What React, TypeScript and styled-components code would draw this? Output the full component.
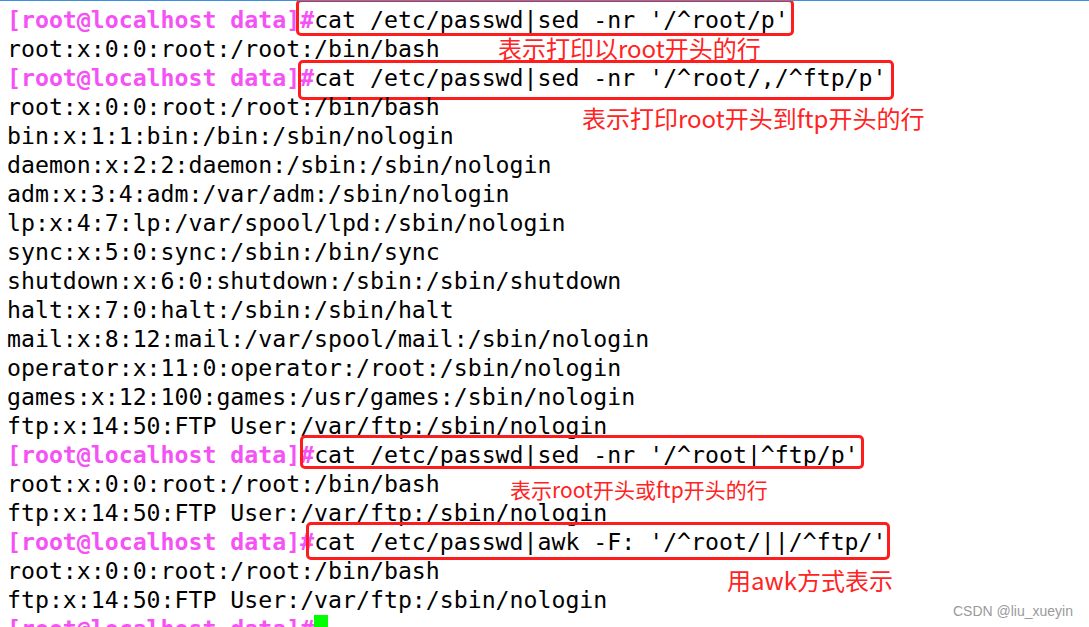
import React from "react";
import styled, { createGlobalStyle } from "styled-components";

const Global = createGlobalStyle`
  html, body { margin: 0; padding: 0; background: #fff; }
  body { width: 1089px; height: 627px; overflow: hidden; }
`;

const Screen = styled.div`
  position: relative;
  width: 1089px;
  height: 627px;
  overflow: hidden;
  background: #fff;
  border-top: 1px solid #3d8fe0;
  box-sizing: border-box;
`;

const Terminal = styled.div`
  display: flex;
  flex-direction: column;
  padding: 4px 0 0 7px;
  font-family: "DejaVu Sans Mono", monospace;
  font-size: 23.2px;
  line-height: 29px;
  color: #000;
  white-space: pre;
`;

const Line = styled.div`
  position: relative;
  height: 29px;
`;

const Prompt = styled.span`
  color: #f552f5;
  font-weight: bold;
`;

const Marked = styled.span<{ $l: number; $r: number; $t: number; $b: number }>`
  position: relative;
  display: inline-block;
  height: 29px;
  vertical-align: top;
  &::after {
    content: "";
    position: absolute;
    left: ${(p) => -p.$l}px;
    right: ${(p) => -p.$r}px;
    top: ${(p) => -p.$t}px;
    bottom: ${(p) => -p.$b}px;
    border: 3px solid #ff1c1c;
    border-radius: 5px;
  }
`;

const Cursor = styled.span`
  display: inline-block;
  width: 14px;
  height: 14px;
  background: #00ff00;
  vertical-align: top;
  margin-top: 1px;
`;

const Note = styled.span<{ $x: number; $dy: number; $size: number }>`
  position: absolute;
  left: ${(p) => p.$x}px;
  top: ${(p) => p.$dy}px;
  font-family: "Noto Sans CJK SC", "Noto Sans", sans-serif;
  font-size: ${(p) => p.$size}px;
  line-height: 1;
  color: #ff2323;
  white-space: nowrap;
`;

const Watermark = styled.div`
  position: absolute;
  right: 16px;
  bottom: 8px;
  font-family: "Liberation Sans", Arial, sans-serif;
  font-size: 14px;
  color: #9a9a9a;
  white-space: nowrap;
`;

const PROMPT = "[root@localhost data]#";

type Mark = { l: number; r: number; t: number; b: number };
type NoteT = { x: number; dy: number; size: number; text: string };
type L = { p?: string; t?: string; mark?: Mark; note?: NoteT; cursor?: boolean };

const lines: L[] = [
  { p: PROMPT, t: "cat /etc/passwd|sed -nr '/^root/p'", mark: { l: 18, r: 5, t: 6, b: 2 } },
  {
    t: "root:x:0:0:root:/root:/bin/bash",
    note: { x: 491, dy: 2, size: 24, text: "表示打印以root开头的行" },
  },
  { p: PROMPT, t: "cat /etc/passwd|sed -nr '/^root/,/^ftp/p'", mark: { l: 16, r: 7, t: 3, b: 8 } },
  { t: "root:x:0:0:root:/root:/bin/bash" },
  {
    t: "bin:x:1:1:bin:/bin:/sbin/nologin",
    note: { x: 575, dy: -15, size: 24, text: "表示打印root开头到ftp开头的行" },
  },
  { t: "daemon:x:2:2:daemon:/sbin:/sbin/nologin" },
  { t: "adm:x:3:4:adm:/var/adm:/sbin/nologin" },
  { t: "lp:x:4:7:lp:/var/spool/lpd:/sbin/nologin" },
  { t: "sync:x:5:0:sync:/sbin:/bin/sync" },
  { t: "shutdown:x:6:0:shutdown:/sbin:/sbin/shutdown" },
  { t: "halt:x:7:0:halt:/sbin:/sbin/halt" },
  { t: "mail:x:8:12:mail:/var/spool/mail:/sbin/nologin" },
  { t: "operator:x:11:0:operator:/root:/sbin/nologin" },
  { t: "games:x:12:100:games:/usr/games:/sbin/nologin" },
  { t: "ftp:x:14:50:FTP User:/var/ftp:/sbin/nologin" },
  { p: PROMPT, t: "cat /etc/passwd|sed -nr '/^root|^ftp/p'", mark: { l: 14, r: 5, t: 5, b: 0 } },
  {
    t: "root:x:0:0:root:/root:/bin/bash",
    note: { x: 503, dy: 10, size: 21, text: "表示root开头或ftp开头的行" },
  },
  { t: "ftp:x:14:50:FTP User:/var/ftp:/sbin/nologin" },
  { p: PROMPT, t: "cat /etc/passwd|awk -F: '/^root/||/^ftp/'", mark: { l: 8, r: 3, t: 5, b: 4 } },
  { t: "root:x:0:0:root:/root:/bin/bash" },
  {
    t: "ftp:x:14:50:FTP User:/var/ftp:/sbin/nologin",
    note: { x: 720, dy: -17, size: 24, text: "用awk方式表示" },
  },
  { p: PROMPT, cursor: true },
];

export default function App() {
  return (
    <>
      <Global />
      <Screen>
        <Terminal>
          {lines.map((l, i) => (
            <Line key={i}>
              {l.p && <Prompt>{l.p}</Prompt>}
              {l.mark ? (
                <Marked $l={l.mark.l} $r={l.mark.r} $t={l.mark.t} $b={l.mark.b}>
                  {l.t}
                </Marked>
              ) : (
                l.t
              )}
              {l.cursor && <Cursor />}
              {l.note && (
                <Note $x={l.note.x} $dy={l.note.dy} $size={l.note.size}>
                  {l.note.text}
                </Note>
              )}
            </Line>
          ))}
        </Terminal>
        <Watermark>CSDN @liu_xueyin</Watermark>
      </Screen>
    </>
  );
}
